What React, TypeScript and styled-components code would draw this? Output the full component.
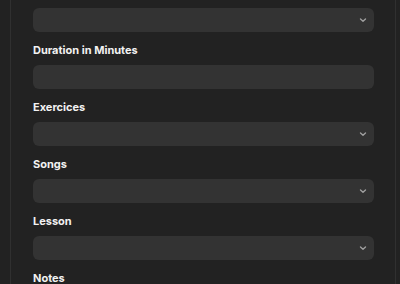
import React from 'react'
import styled, { createGlobalStyle } from 'styled-components'

const GlobalStyle = createGlobalStyle`
  html, body {
    margin: 0;
    padding: 0;
    background: #222222;
    font-family: Inter, "Liberation Sans", sans-serif;
  }
`

const Page = styled.div`
  width: 400px;
  height: 284px;
  overflow: hidden;
  background: #222222;
  padding-left: 10px;
  box-sizing: border-box;
`

const Panel = styled.div`
  width: 386px;
  height: 284px;
  box-sizing: border-box;
  border-left: 1px solid #303030;
  border-right: 1px solid #303030;
  padding: 8px 21px 0 22px;
  display: flex;
  flex-direction: column;
  gap: 11px;
`

const Field = styled.div`
  display: flex;
  flex-direction: column;
  gap: 8px;
`

const Label = styled.label`
  font-size: 11px;
  line-height: 14px;
  font-weight: 700;
  color: #f2f2f2;
`

const Box = styled.div`
  height: 24px;
  border-radius: 6px;
  background: #333333;
  display: flex;
  align-items: center;
  justify-content: flex-end;
  padding-right: 7px;
`

const Chevron = () => (
  <svg width="8" height="6" viewBox="0 0 8 6">
    <path d="M1.5 2 L4 4.2 L6.5 2" fill="none" stroke="#a0a0a0" strokeWidth="1.4" strokeLinecap="round" strokeLinejoin="round" />
  </svg>
)

type FieldProps = { label?: string; select?: boolean }

const FormField = ({ label, select = true }: FieldProps) => (
  <Field>
    {label && <Label>{label}</Label>}
    <Box>{select && <Chevron />}</Box>
  </Field>
)

export default function App() {
  return (
    <Page>
      <GlobalStyle />
      <Panel>
        <FormField />
        <FormField label="Duration in Minutes" select={false} />
        <FormField label="Exercices" />
        <FormField label="Songs" />
        <FormField label="Lesson" />
        <FormField label="Notes" select={false} />
      </Panel>
    </Page>
  )
}
